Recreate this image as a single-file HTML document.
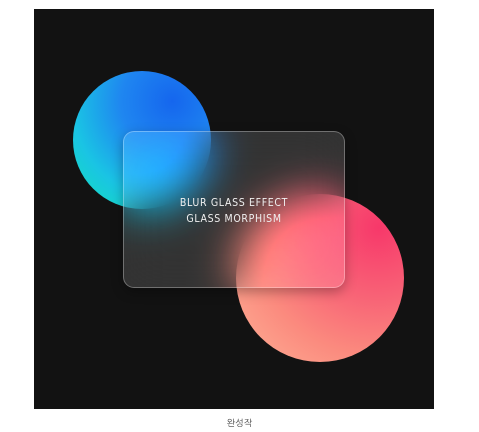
<!DOCTYPE html>
<html><head><meta charset="utf-8"><style>
html,body{margin:0;padding:0;background:#fff;width:479px;height:432px;overflow:hidden;}
.box{position:absolute;left:34px;top:9px;width:400px;height:400px;background:#121212;overflow:hidden;}
.c1{position:absolute;left:39px;top:62px;width:138px;height:138px;border-radius:50%;
background:radial-gradient(circle at 72% 22%,#1566ee 0%,#1f86f0 35%,#1ac4e4 68%,#12e4b8 100%);}
.c2{position:absolute;left:202px;top:185px;width:168px;height:168px;border-radius:50%;
background:radial-gradient(circle at 85% 20%,#f7386a 0%,#f86276 35%,#fb8a7e 65%,#fdb296 100%);}
.card{position:absolute;left:89px;top:122px;width:220px;height:155px;border-radius:11px;
background:rgba(255,255,255,0.14);border:1px solid rgba(255,255,255,0.3);
backdrop-filter:blur(22px) saturate(1.4);-webkit-backdrop-filter:blur(22px) saturate(1.4);
box-shadow:0 4px 12px rgba(0,0,0,0.3);}
.t{position:absolute;left:0;right:0;top:63px;text-align:center;color:#f0f0f0;
font-family:"DejaVu Sans Condensed","Liberation Sans",sans-serif;font-size:10.5px;line-height:16px;letter-spacing:0.65px;}
.cap{position:absolute;left:0;width:479px;top:418px;text-align:center;font-size:9px;color:#444;
font-family:"Liberation Sans","NanumGothic",sans-serif;}
</style></head><body>
<div class="box">
<div class="c1"></div><div class="c2"></div>
<div class="card"><div class="t">BLUR GLASS EFFECT<br>GLASS MORPHISM</div></div>
</div>
<div class="cap">완성작</div>
</body></html>
